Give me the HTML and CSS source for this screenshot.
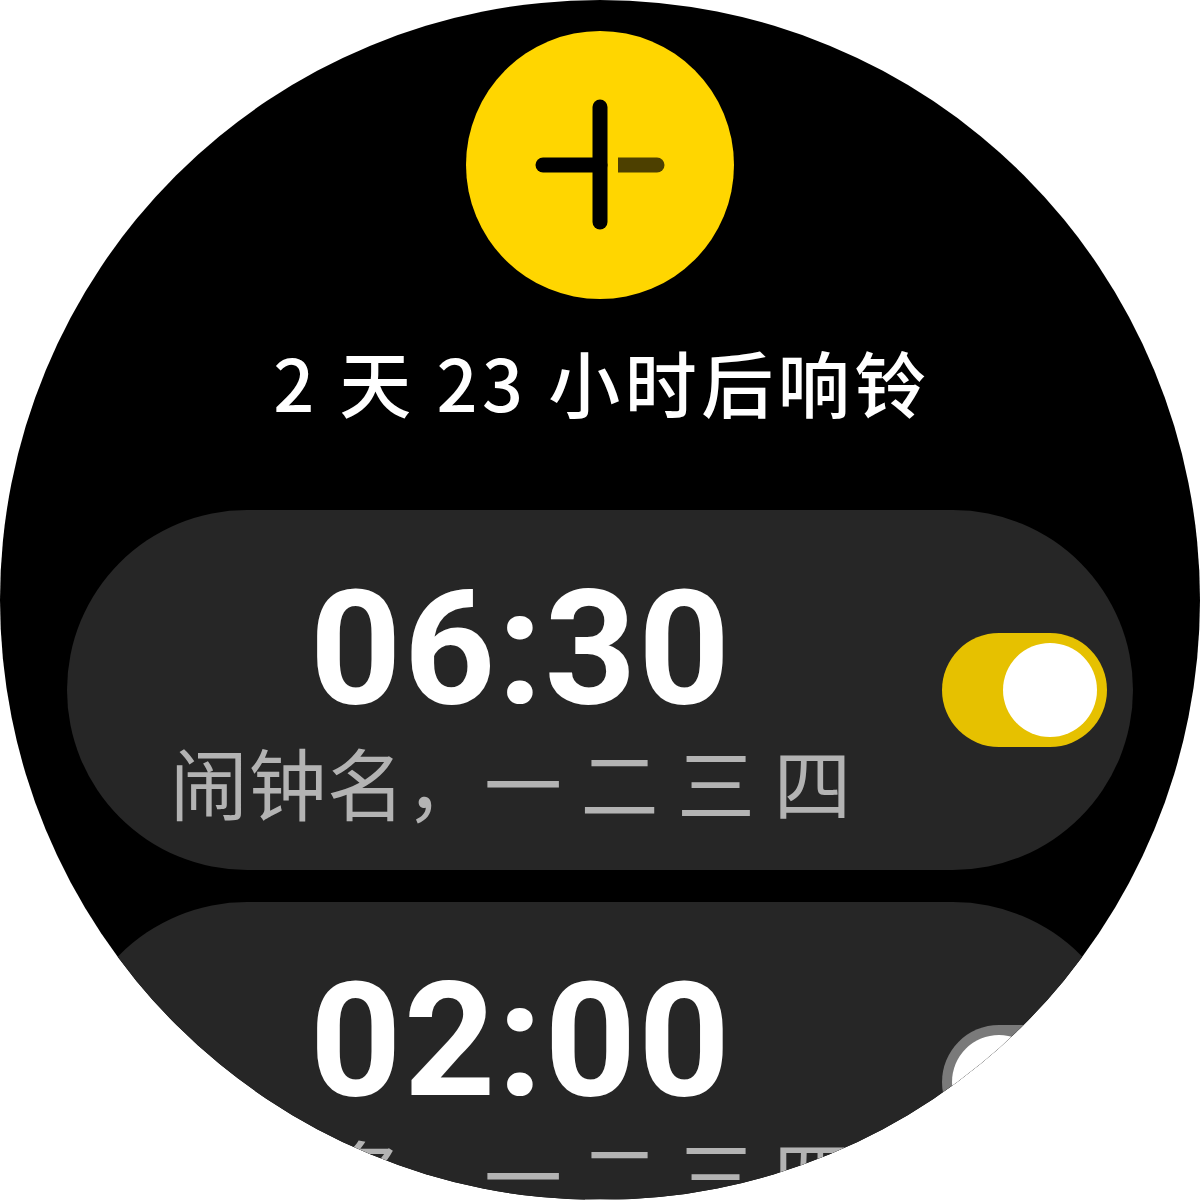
FILE: index.html
```html
<!DOCTYPE html>
<html lang="zh-CN">
<head>
<meta charset="utf-8">
<title>闹钟</title>
<link rel="stylesheet" href="styles.css">
</head>
<body>
<div class="watch">
  <button class="add-btn" aria-label="添加闹钟">
    <svg class="plus" viewBox="0 0 268 268" width="268" height="268">
      <line x1="134" y1="76" x2="134" y2="191" stroke="#000" stroke-width="15" stroke-linecap="round"/>
      <line x1="77" y1="134" x2="134" y2="134" stroke="#000" stroke-width="15" stroke-linecap="round"/>
      <path d="M152 126.5 H191 A7.5 7.5 0 0 1 191 141.5 H152 Z" fill="#4d4000"/>
    </svg>
  </button>
  <div class="next">2 天 23 小时后响铃</div>
  <div class="alarm">
    <div class="info">
      <div class="time">06:30</div>
      <div class="label">闹钟名，一 二 三 四</div>
    </div>
    <div class="toggle on"><span class="knob"></span></div>
  </div>
  <div class="alarm second">
    <div class="info">
      <div class="time">02:00</div>
      <div class="label">闹钟名，一 二 三 四</div>
    </div>
    <div class="toggle off"><span class="knob"></span></div>
  </div>
</div>
</body>
</html>
```

FILE: styles.css
```css
html, body {
  margin: 0;
  padding: 0;
  background: #ffffff;
}

.watch {
  width: 1200px;
  height: 1200px;
  border-radius: 50%;
  background: #000000;
  overflow: hidden;
  display: flex;
  flex-direction: column;
  align-items: center;
}

.add-btn {
  margin-top: 31px;
  width: 268px;
  height: 268px;
  border: none;
  padding: 0;
  border-radius: 50%;
  background: #ffd600;
  display: flex;
  align-items: center;
  justify-content: center;
  flex-shrink: 0;
}

.plus {
  display: block;
}

.next {
  margin-top: 46px;
  padding-left: 4px;
  font-family: "Noto Sans CJK SC", "Noto Sans", sans-serif;
  font-weight: 500;
  font-size: 72px;
  line-height: 72px;
  letter-spacing: 4.5px;
  color: #ffffff;
  white-space: nowrap;
}

.alarm {
  flex-shrink: 0;
  margin-top: 93px;
  width: 1066px;
  box-sizing: border-box;
  height: 360px;
  padding: 59px 26px 50px 33px;
  border-radius: 180px;
  background: #262626;
  display: flex;
  align-items: center;
  gap: 12px;
}

.alarm.second {
  margin-top: 32px;
}

.info {
  flex: 1;
  display: flex;
  flex-direction: column;
  align-items: center;
  gap: 13px;
}

.time {
  padding-left: 12px;
  font-family: Roboto, "Liberation Sans", sans-serif;
  font-weight: 700;
  font-size: 160px;
  line-height: 160px;
  letter-spacing: 2px;
  color: #ffffff;
}

.label {
  padding-right: 8px;
  font-family: "Noto Sans CJK SC", "Noto Sans", sans-serif;
  font-size: 78px;
  line-height: 78px;
  letter-spacing: 0.5px;
  color: #b3b3b3;
  white-space: nowrap;
}

.toggle {
  flex-shrink: 0;
  width: 165px;
  height: 114px;
  border-radius: 57px;
  box-sizing: border-box;
  padding: 10px;
  margin-bottom: 9px;
  display: flex;
  align-items: center;
}

.toggle.on {
  background: #e6c100;
  justify-content: flex-end;
}

.toggle.off {
  background: #7a7a7a;
  justify-content: flex-start;
}

.knob {
  width: 94px;
  height: 94px;
  border-radius: 50%;
  background: #ffffff;
}
```
